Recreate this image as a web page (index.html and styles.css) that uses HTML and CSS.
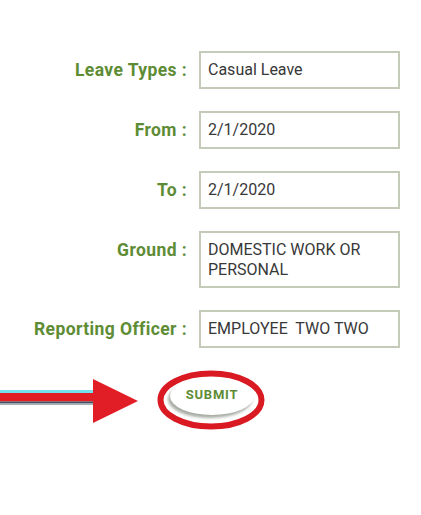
FILE: index.html
```html
<!DOCTYPE html>
<html>
<head>
<meta charset="utf-8">
<link rel="stylesheet" href="styles.css">
</head>
<body>
<div class="page">
  <div class="form">
    <div class="label">Leave Types :</div>
    <div class="field">Casual Leave</div>
    <div class="label">From :</div>
    <div class="field">2/1/2020</div>
    <div class="label">To :</div>
    <div class="field">2/1/2020</div>
    <div class="label">Ground :</div>
    <div class="field multi">DOMESTIC WORK OR<br>PERSONAL</div>
    <div class="label">Reporting Officer :</div>
    <div class="field">EMPLOYEE&nbsp; TWO TWO</div>
  </div>
  <div class="actions">
    <svg class="arrow" width="140" height="60" viewBox="0 0 140 60">
      <rect x="0" y="20" width="95" height="3.5" fill="#74e2ee"/>
      <rect x="0" y="23" width="95" height="8.5" fill="#e11e25"/>
      <rect x="0" y="31.5" width="95" height="2" fill="#3e4c5c"/>
      <rect x="0" y="33.5" width="95" height="1.5" fill="#a7b0b8"/>
      <polygon points="93,9 138,31 93,53" fill="#e11e25"/>
    </svg>
    <div class="submit-wrap">
      <button class="submit">SUBMIT</button>
      <svg class="circle" width="108" height="60" viewBox="0 0 108 60">
        <ellipse cx="54" cy="30" rx="50.5" ry="26.5" fill="none" stroke="#d91a22" stroke-width="6"/>
      </svg>
    </div>
  </div>
</div>
</body>
</html>
```
FILE: styles.css
```css
html, body {
  margin: 0;
  padding: 0;
  background: #ffffff;
}
.page {
  width: 421px;
  height: 515px;
  padding-top: 51px;
  box-sizing: border-box;
  font-family: Roboto, "Liberation Sans", sans-serif;
}
.form {
  display: grid;
  grid-template-columns: 187px 201px;
  column-gap: 12px;
  row-gap: 22px;
}
.label {
  text-align: right;
  font-size: 17.5px;
  letter-spacing: 0.4px;
  font-weight: bold;
  color: #5e8c35;
  line-height: 38px;
}
.field {
  box-sizing: border-box;
  border: 2px solid #c4ccb9;
  height: 38px;
  padding: 0 7px;
  line-height: 34px;
  font-size: 16px;
  color: #383838;
}
.field.multi {
  height: 57px;
  padding-top: 7px;
  line-height: 20px;
}
.actions {
  display: flex;
  align-items: flex-start;
  gap: 17px;
  margin-top: 22px;
}
.arrow {
  display: block;
}
.submit-wrap {
  position: relative;
  width: 108px;
  height: 60px;
  display: flex;
  justify-content: center;
  padding-top: 7px;
  box-sizing: border-box;
}
.submit {
  width: 84px;
  height: 38px;
  margin-left: 2px;
  border: none;
  border-radius: 50%;
  background: #ffffff;
  box-shadow: -2px 3px 3px rgba(60, 70, 50, 0.45);
  font-family: Roboto, "Liberation Sans", sans-serif;
  font-size: 13px;
  letter-spacing: 0.8px;
  font-weight: bold;
  color: #5e8c35;
  padding: 0 0 3px 0;
}
.circle {
  position: absolute;
  left: 0;
  top: 0;
}
```
